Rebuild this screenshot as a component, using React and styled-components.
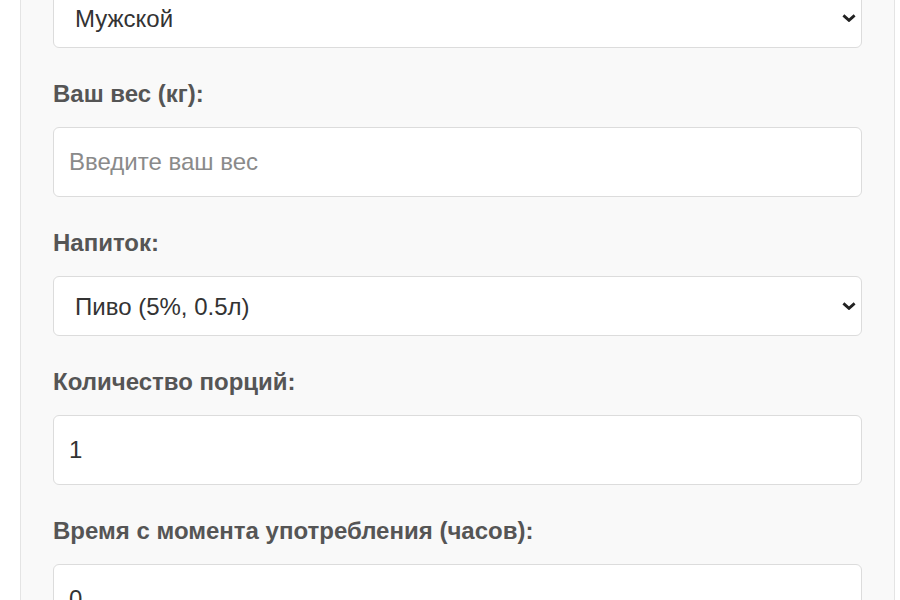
import React from 'react'
import styled, { createGlobalStyle } from 'styled-components'

const GlobalStyle = createGlobalStyle`
  body {
    margin: 0;
    background: #fff;
    font-family: "Liberation Sans", Arial, sans-serif;
    overflow: hidden;
  }
`

const chevron =
  "data:image/svg+xml;utf8,<svg xmlns='http://www.w3.org/2000/svg' width='14' height='8' viewBox='0 0 14 8'><path d='M1.4 1.4 L7 6.4 L12.6 1.4' fill='none' stroke='%23222' stroke-width='2.8'/></svg>"

// the page is scrolled down a bit, so the card starts above the viewport
const Card = styled.div`
  box-sizing: border-box;
  width: 875px;
  margin: -92px 0 0 20px;
  padding: 32px 32px 40px;
  background: #f9f9f9;
  border: 1px solid #e4e4e4;
  border-radius: 10px;
`

const Group = styled.div`
  margin-bottom: 32px;
`

const Label = styled.label`
  display: block;
  margin-bottom: 19px;
  font-size: 24px;
  line-height: 28px;
  font-weight: bold;
  color: #555;
`

const fieldBase = `
  display: block;
  box-sizing: border-box;
  width: 100%;
  padding: 0 15px;
  font-family: "Liberation Sans", Arial, sans-serif;
  font-size: 24px;
  color: #333;
  background-color: #fff;
  border: 1px solid #dcdcdc;
  border-radius: 6px;
  outline: none;
`

const Input = styled.input`
  ${fieldBase}
  height: 70px;
  &::placeholder {
    color: #8a8a8a;
  }
`

const Select = styled.select`
  ${fieldBase}
  height: 60px;
  padding-left: 21px;
  appearance: none;
  background-image: url("${chevron}");
  background-repeat: no-repeat;
  background-position: right 5px center;
  background-size: 14px 8px;
`

const Field = ({ label, children }) => (
  <Group>
    <Label>{label}</Label>
    {children}
  </Group>
)

export default function App() {
  return (
    <>
      <GlobalStyle />
      <Card>
        <Field label="Пол:">
          <Select defaultValue="m">
            <option value="m">Мужской</option>
            <option value="f">Женский</option>
          </Select>
        </Field>
        <Field label="Ваш вес (кг):">
          <Input type="number" placeholder="Введите ваш вес" />
        </Field>
        <Field label="Напиток:">
          <Select defaultValue="beer">
            <option value="beer">Пиво (5%, 0.5л)</option>
            <option value="wine">Вино (12%, 0.15л)</option>
            <option value="vodka">Водка (40%, 0.05л)</option>
          </Select>
        </Field>
        <Field label="Количество порций:">
          <Input type="number" defaultValue="1" />
        </Field>
        <Field label="Время с момента употребления (часов):">
          <Input type="number" defaultValue="0" />
        </Field>
      </Card>
    </>
  )
}
